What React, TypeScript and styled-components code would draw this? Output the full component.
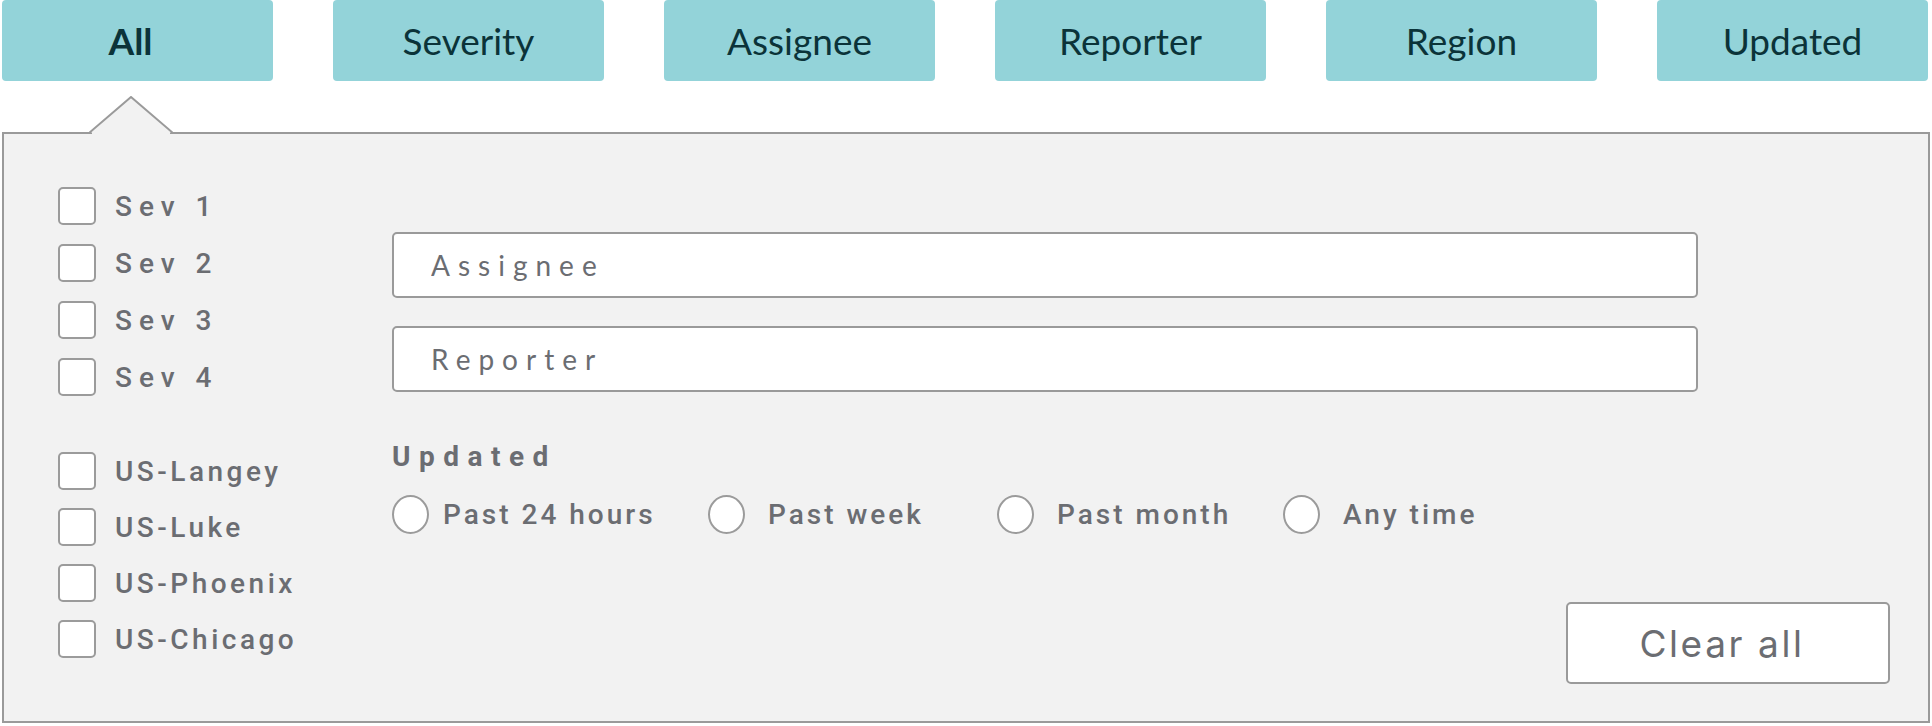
import * as React from 'react';
import styled, { createGlobalStyle } from 'styled-components';

const GlobalStyle = createGlobalStyle`
  body {
    margin: 0;
    background: #fff;
    font-family: Roboto, "Liberation Sans", sans-serif;
  }
`;

const Page = styled.div`
  width: 1932px;
  height: 726px;
  overflow: hidden;
`;

const TabBar = styled.div`
  display: flex;
  justify-content: space-between;
  padding: 0 4px 0 2px;
  height: 81px;
`;

const Tab = styled.div<{ $active?: boolean }>`
  width: 271px;
  height: 81px;
  box-sizing: border-box;
  padding-right: ${p => (p.$active ? 14 : 0)}px;
  display: flex;
  align-items: center;
  justify-content: center;
  background-color: #93d3d9;
  border-radius: 4px;
  color: #0b3339;
  font-family: Lato, "Liberation Sans", sans-serif;
  font-size: 37px;
  font-weight: ${p => (p.$active ? 700 : 400)};
`;

const Panel = styled.div`
  position: relative;
  box-sizing: border-box;
  height: 591px;
  margin: 51px 2px 0 2px;
  padding: 53px 38px 37px 54px;
  border: 2px solid #9a9a9a;
  background-color: #f2f2f2;
  display: flex;
`;

const Caret = styled.svg`
  position: absolute;
  left: 85px;
  top: -38px;
  width: 84px;
  height: 40px;
`;

const LeftColumn = styled.div`
  width: 334px;
  flex-shrink: 0;
  display: flex;
  flex-direction: column;
`;

const CheckGroup = styled.div<{ $gap: number; $top?: number }>`
  display: flex;
  flex-direction: column;
  gap: ${p => p.$gap}px;
  margin-top: ${p => p.$top || 0}px;
`;

const CheckRow = styled.label`
  display: flex;
  align-items: center;
  gap: 19px;
  height: 38px;
`;

const Box = styled.span`
  width: 38px;
  height: 38px;
  box-sizing: border-box;
  border: 2px solid #9b9b9b;
  border-radius: 5px;
  background-color: #fff;
  flex-shrink: 0;
`;

const CheckLabel = styled.span<{ $spacing: number }>`
  font-family: Roboto, "Liberation Sans", sans-serif;
  font-size: 28px;
  font-weight: 500;
  letter-spacing: ${p => p.$spacing}px;
  color: #6b6d72;
  white-space: nowrap;
`;

const MainColumn = styled.div`
  flex: 1;
  display: flex;
  flex-direction: column;
  padding-top: 45px;
`;

const TextField = styled.input`
  box-sizing: border-box;
  width: 1306px;
  height: 66px;
  margin: 0 0 28px 0;
  padding: 0 0 0 37px;
  border: 2px solid #9a9a9a;
  border-radius: 5px;
  background-color: #fff;
  outline: 0;
  font-family: Lato, "Liberation Sans", sans-serif;
  font-size: 28px;
  letter-spacing: 8px;
  color: #6b6d72;

  &::placeholder {
    color: #6b6d72;
    opacity: 1;
  }
`;

const SectionTitle = styled.div`
  margin-top: 23px;
  line-height: 28px;
  font-family: Roboto, "Liberation Sans", sans-serif;
  font-size: 28px;
  font-weight: 700;
  letter-spacing: 8.5px;
  color: #6b6d72;
`;

const RadioRow = styled.div`
  display: grid;
  grid-template-columns: 316px 289px 286px auto;
  margin-top: 24px;
`;

const RadioOption = styled.label<{ $gap: number }>`
  display: flex;
  align-items: center;
  gap: ${p => p.$gap}px;
`;

const RadioDot = styled.span`
  width: 37px;
  height: 39px;
  box-sizing: border-box;
  border: 2px solid #9b9b9b;
  border-radius: 50%;
  background-color: #fff;
  flex-shrink: 0;
`;

const RadioLabel = styled.span`
  font-family: Roboto, "Liberation Sans", sans-serif;
  font-size: 28px;
  font-weight: 500;
  letter-spacing: 3px;
  color: #6b6d72;
  white-space: nowrap;
`;

const ClearButton = styled.button`
  margin-top: auto;
  align-self: flex-end;
  width: 324px;
  height: 82px;
  box-sizing: border-box;
  padding: 0 12px 0 0;
  border: 2px solid #9a9a9a;
  border-radius: 5px;
  background-color: #fff;
  font-family: Inter, "Liberation Sans", sans-serif;
  font-size: 37px;
  font-weight: 400;
  letter-spacing: 2.6px;
  color: #6b6d72;
  cursor: pointer;
`;

const tabs = ['All', 'Severity', 'Assignee', 'Reporter', 'Region', 'Updated'];
const severities = ['Sev 1', 'Sev 2', 'Sev 3', 'Sev 4'];
const regions = ['US-Langey', 'US-Luke', 'US-Phoenix', 'US-Chicago'];
const times = ['Past 24 hours', 'Past week', 'Past month', 'Any time'];

export default function App() {
  return (
    <Page>
      <GlobalStyle />
      <TabBar>
        {tabs.map((t, i) => (
          <Tab key={t} $active={i === 0}>{t}</Tab>
        ))}
      </TabBar>
      <Panel>
        <Caret viewBox="0 0 84 40">
          <rect x="3" y="34" width="78" height="6" fill="#f2f2f2" />
          <polygon points="2,37 42,1 82,37" fill="#f2f2f2" />
          <polyline points="0,37 42,1 84,37" fill="none" stroke="#9a9a9a" strokeWidth="2" />
        </Caret>
        <LeftColumn>
          <CheckGroup $gap={19}>
            {severities.map(s => (
              <CheckRow key={s}>
                <Box />
                <CheckLabel $spacing={7}>{s}</CheckLabel>
              </CheckRow>
            ))}
          </CheckGroup>
          <CheckGroup $gap={18} $top={56}>
            {regions.map(r => (
              <CheckRow key={r}>
                <Box />
                <CheckLabel $spacing={3.5}>{r}</CheckLabel>
              </CheckRow>
            ))}
          </CheckGroup>
        </LeftColumn>
        <MainColumn>
          <TextField placeholder="Assignee" />
          <TextField placeholder="Reporter" />
          <SectionTitle>Updated</SectionTitle>
          <RadioRow>
            {times.map((t, i) => (
              <RadioOption key={t} $gap={i === 0 ? 14 : 23}>
                <RadioDot />
                <RadioLabel>{t}</RadioLabel>
              </RadioOption>
            ))}
          </RadioRow>
          <ClearButton>Clear all</ClearButton>
        </MainColumn>
      </Panel>
    </Page>
  );
}
